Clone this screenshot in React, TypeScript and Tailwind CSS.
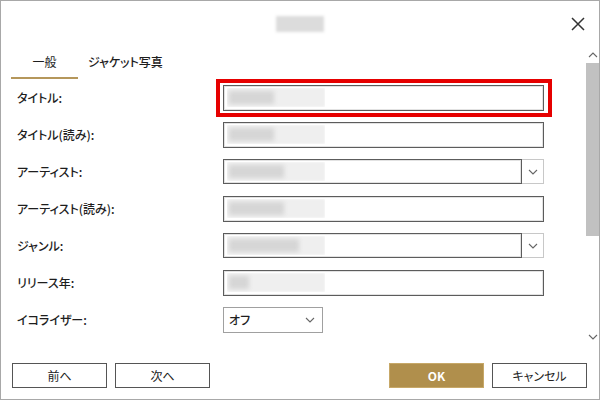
import React from 'react'

const jp = "font-['Noto_Sans_CJK_JP','Noto_Sans',sans-serif] [font-feature-settings:'palt']"

// blurred placeholder for a field value
function Smudge({ w = 98, dark = 45 }: { w?: number; dark?: number }) {
  return (
    <span className="relative block h-[19px] overflow-hidden" style={{ width: w }}>
      <span className="absolute inset-0 bg-[#efefef] blur-[1px]" />
      <span className="absolute inset-y-[3px] left-[2px] bg-[#d6d6d6] blur-[2px]" style={{ width: dark }} />
    </span>
  )
}

function Chevron({ className = '' }: { className?: string }) {
  return (
    <svg width="10" height="6" viewBox="0 0 10 6" className={className}>
      <path d="M1 1l4 4 4-4" fill="none" stroke="#666" strokeWidth="1.1" />
    </svg>
  )
}

function TextField({ w = 98, dark = 45 }: { w?: number; dark?: number }) {
  return (
    <div className="flex h-[26px] w-[321px] items-center border border-[#5c5c5c] bg-white pl-[3px] shadow-[inset_0_0_0_1px_#e2e2e2]">
      <Smudge w={w} dark={dark} />
    </div>
  )
}

function ComboField({ w = 98, dark = 45 }: { w?: number; dark?: number }) {
  return (
    <div className="flex h-[25px] w-[321px]">
      <div className="flex flex-1 items-center border border-[#5c5c5c] bg-white pl-[3px] shadow-[inset_0_0_0_1px_#e2e2e2]">
        <Smudge w={w} dark={dark} />
      </div>
      <div className="flex w-[22px] items-center justify-center border border-l-0 border-[#c8c8c8]">
        <Chevron />
      </div>
    </div>
  )
}

function Row({ label, children }: { label: string; children: React.ReactNode }) {
  return (
    <div className="flex h-[37px] items-center">
      <div className="w-[222px] pl-4 text-[12px] font-medium text-[#1e1e1e]">{label}</div>
      {children}
    </div>
  )
}

function Button({ children, primary = false }: { children: React.ReactNode; primary?: boolean }) {
  return (
    <button
      className={
        primary
          ? 'h-[25px] w-[95px] border border-[#c7a868] bg-[#b08f4c] text-[12px] font-bold text-white'
          : 'h-[25px] w-[95px] border border-[#555] bg-white text-[12px] text-[#222]'
      }
    >
      {children}
    </button>
  )
}

export default function App() {
  return (
    <div className={`flex h-[400px] w-[600px] flex-col border border-[#a8a8a8] bg-white ${jp}`}>
      {/* title bar */}
      <div className="grid h-[45px] grid-cols-[1fr_auto_1fr] items-center">
        <div />
        <span className="block h-[16px] w-[48px] bg-[#dcdcdc] blur-[1.5px]" />
        <div className="flex justify-end pr-[14px]">
          <svg width="14" height="14" viewBox="0 0 14 14">
            <path d="M1 1l12 12M13 1L1 13" stroke="#333" strokeWidth="1.5" />
          </svg>
        </div>
      </div>

      <div className="flex h-[302px]">
        <div className="flex flex-1 flex-col overflow-hidden">
          {/* tabs */}
          <div className="ml-[10px] flex h-[33px] text-[12px] text-[#1e1e1e]">
            <div className="flex w-[67px] items-center justify-center border-b-2 border-[#b5975b]">一般</div>
            <div className="flex items-center pb-[2px] pl-[10px] font-medium">ジャケット写真</div>
          </div>

          <Row label="タイトル:">
            <div className="relative">
              <TextField />
              <span className="absolute -bottom-[6px] -left-[7px] -right-[8px] -top-[6px] border-4 border-[#e60000]" />
            </div>
          </Row>
          <Row label="タイトル(読み):">
            <TextField />
          </Row>
          <Row label="アーティスト:">
            <ComboField dark={55} />
          </Row>
          <Row label="アーティスト(読み):">
            <TextField dark={55} />
          </Row>
          <Row label="ジャンル:">
            <ComboField dark={70} />
          </Row>
          <Row label="リリース年:">
            <TextField dark={20} />
          </Row>
          <Row label="イコライザー:">
            <div className="flex h-[26px] w-[100px] items-center justify-between border border-[#a0a0a0] pl-[5px] pr-[7px] text-[12px] font-medium text-[#1e1e1e]">
              オフ
              <Chevron />
            </div>
          </Row>
        </div>

        {/* scrollbar */}
        <div className="flex w-[13px] flex-col items-center">
          <svg width="10" height="6" viewBox="0 0 10 6" className="mt-[6px]">
            <path d="M1 5l4-4 4 4" fill="none" stroke="#666" strokeWidth="1.1" />
          </svg>
          <div className="mt-[5px] h-[173px] w-full bg-[#c1c1c1]" />
          <div className="flex-1" />
          <Chevron className="mb-[8px]" />
        </div>
      </div>

      {/* footer */}
      <div className="flex flex-1 items-start justify-between pl-[11px] pr-[12px] pt-[15px]">
        <div className="flex gap-2">
          <Button>前へ</Button>
          <Button>次へ</Button>
        </div>
        <div className="flex gap-2">
          <Button primary>OK</Button>
          <Button>キャンセル</Button>
        </div>
      </div>
    </div>
  )
}
